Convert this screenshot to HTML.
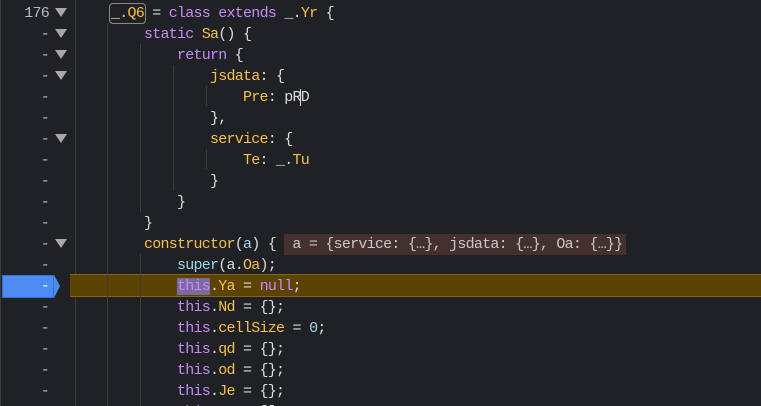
<!DOCTYPE html>
<html><head><meta charset="utf-8"><style>
html,body{margin:0;padding:0;width:761px;height:406px;overflow:hidden;background:#202124;}
body{position:relative;font-family:"Liberation Mono",monospace;font-size:15px;letter-spacing:-0.75px;}
.gut{position:absolute;left:0;top:0;width:74px;height:406px;border-left:1px solid #3c3c3c;border-right:1px solid #3c3c3c;}
.row{position:absolute;left:0;height:21px;line-height:21px;white-space:pre;color:#dcdcdc;}
.num{position:absolute;text-align:right;color:#b8bcc4;}
.tri{position:absolute;left:55px;width:0;height:0;border-left:6px solid transparent;border-right:6px solid transparent;border-top:9px solid #a8a8a8;top:5px;}
.code{position:absolute;left:0;}
.g{position:absolute;top:0;width:1px;background:#3c3c3c;}
.k{color:#c58af9}.p{color:#f5c14a}.c{color:#9fd7ef}.n{color:#9fd7ef}.w{color:#dcdcdc}
.hl{position:absolute;left:70px;top:274px;width:691px;height:21px;background:#5c4300;border-top:1px solid #8a6410;border-bottom:1px solid #8a6410;}
.bp{position:absolute;left:2px;top:275px;width:50px;height:21px;background:#4e8bf0;border:1px solid #2f6fe0;}
.bp:after{content:"";position:absolute;right:-7px;top:-1px;border-top:11px solid transparent;border-bottom:12px solid transparent;border-left:6px solid #4e8bf0;}
</style></head><body>
<div class="gut"></div>
<div class="hl"></div>
<div class="bp"></div>
<div class="g" style="left:107px;top:23px;height:383px"></div>
<div class="g" style="left:140px;top:44px;height:168px"></div>
<div class="g" style="left:173px;top:65px;height:126px"></div>
<div class="g" style="left:206px;top:86px;height:20px"></div>
<div class="g" style="left:206px;top:149px;height:20px"></div>
<div class="g" style="left:140px;top:254px;height:152px"></div>
<div id="rows"></div>
<script>
var L=[
["176",1,0,'<span style="outline:1px solid #8a8a8a;outline-offset:1px;border-radius:2px" class="p"><span class="w">_</span>.Q6</span> = <span class="k">class extends</span> _.<span class="p">Yr</span> {'],
["-",1,1,'<span class="k">static</span> <span class="p">Sa</span>() {'],
["-",1,2,'<span class="k">return</span> {'],
["-",1,3,'<span class="p">jsdata</span>: {'],
["-",0,4,'<span class="p">Pre</span>: pR<span style="border-left:1px solid #ddd;margin-left:-1px"></span>D'],
["-",0,3,'},'],
["-",1,3,'<span class="p">service</span>: {'],
["-",0,4,'<span class="p">Te</span>: _.<span class="p">Tu</span>'],
["-",0,3,'}'],
["-",0,2,'}'],
["-",0,1,'}'],
["-",1,1,'<span class="p">constructor</span>(<span class="c">a</span>) { <span style="background:#44302f;color:#c8c8c8;padding:2px 4px 2px 8px">a = {service: {…}, jsdata: {…}, Oa: {…}}</span>'],
["-",0,2,'<span class="c">super</span>(a.<span class="p">Oa</span>);'],
["-",0,2,'<span class="k" style="background:#7b6aa0">this</span>.<span class="p">Ya</span> = <span class="k">null</span>;'],
["-",0,2,'<span class="k">this</span>.<span class="p">Nd</span> = {};'],
["-",0,2,'<span class="k">this</span>.<span class="p">cellSize</span> = <span class="n">0</span>;'],
["-",0,2,'<span class="k">this</span>.<span class="p">qd</span> = {};'],
["-",0,2,'<span class="k">this</span>.<span class="p">od</span> = {};'],
["-",0,2,'<span class="k">this</span>.<span class="p">Je</span> = {};'],
["-",0,2,'<span class="k">this</span>.<span class="p">Ke</span> = [];']
];
var h='';
L.forEach(function(r,i){
 var t=3+i*21;
 h+='<div class="row" style="top:'+t+'px;width:761px">'+
 '<span class="num" style="left:0;width:49px;'+(i==13?'color:#fff':'')+'">'+r[0]+'</span>'+
 (r[1]?'<span class="tri"></span>':'')+
 '<span class="code" style="left:'+(111+r[2]*33)+'px">'+r[3]+'</span></div>';
});
document.getElementById('rows').innerHTML=h;
</script>
</body></html>
